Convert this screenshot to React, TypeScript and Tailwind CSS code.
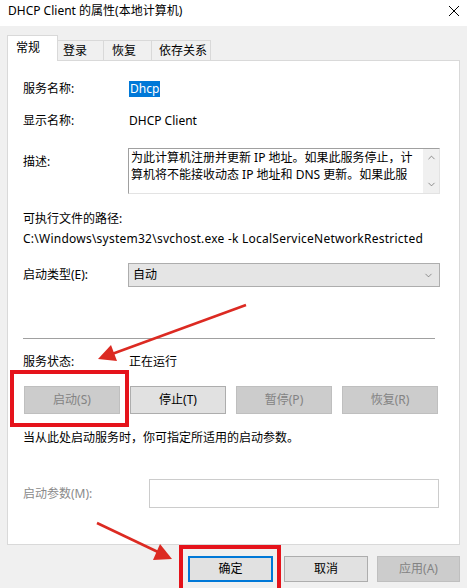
import { ChevronDown, ChevronUp } from "lucide-react";

const font = "font-['Noto_Sans','Noto_Sans_CJK_SC',sans-serif]";

function Tab({ label, w, pl, active }: { label: string; w: string; pl: string; active?: boolean }) {
  if (active) {
    return (
      <div className={`${w} ${pl} h-[26px] -mb-px bg-white border border-b-0 border-[#d9d9d9] pt-[3px] leading-[18px] relative z-10`}>
        {label}
      </div>
    );
  }
  return (
    <div className={`${w} ${pl} h-[20px] bg-[#f0f0f0] border-t border-r border-[#d9d9d9] leading-[20px]`}>
      {label}
    </div>
  );
}

function Btn({ label, w, disabled, primary }: { label: string; w: string; disabled?: boolean; primary?: boolean }) {
  const base = "flex items-center justify-center h-full";
  if (disabled) {
    return <div className={`${base} ${w} bg-[#cccccc] border border-[#bfbfbf] text-[#838383]`}>{label}</div>;
  }
  if (primary) {
    return <div className={`${base} ${w} bg-[#e1e1e1] border-2 border-[#0078d7]`}>{label}</div>;
  }
  return <div className={`${base} ${w} bg-[#e1e1e1] border border-[#adadad]`}>{label}</div>;
}

export default function App() {
  return (
    <div className={`relative w-[467px] h-[588px] overflow-hidden bg-[#f0f0f0] text-[12px] text-black ${font}`}>
      {/* Title bar */}
      <div className="h-[26px] bg-white flex items-center justify-between pl-2 pr-[7px]">
        <span className="leading-[20px] -mt-[4px]">DHCP Client 的属性(本地计算机)</span>
        <svg width="12" height="12" viewBox="0 0 12 12" className="-mt-[4px]">
          <path d="M1 1 L11 11 M11 1 L1 11" stroke="#000" strokeWidth="1" />
        </svg>
      </div>

      {/* Tabs */}
      <div className="pt-[9px] px-[7px]">
        <div className="flex items-end h-[25px]">
          <Tab label="常规" w="w-[51px]" pl="pl-[8px]" active />
          <Tab label="登录" w="w-[46px]" pl="pl-[5px]" />
          <Tab label="恢复" w="w-[48px]" pl="pl-[8px]" />
          <Tab label="依存关系" w="w-[59px]" pl="pl-[7px]" />
        </div>

        {/* Panel */}
        <div className="h-[485px] bg-white border border-[#d9d9d9] pl-[15px]">
          <div className="flex items-center h-[20px] mt-[18px]">
            <span className="w-[106px]">服务名称:</span>
            <span className="bg-[#0078d7] text-white leading-[16px] px-px">Dhcp</span>
          </div>
          <div className="flex items-center h-[20px] mt-[12px]">
            <span className="w-[106px]">显示名称:</span>
            <span>DHCP Client</span>
          </div>
          <div className="flex h-[46px] mt-[17px]">
            <span className="w-[105px] pt-[4px] leading-[20px]">描述:</span>
            <div className="flex w-[312px] h-[46px] border-t border-l border-[#a0a0a0] border-b border-r border-b-[#e3e3e3] border-r-[#e3e3e3]">
              <div className="flex-1 pl-[2px] leading-[17px] overflow-hidden">
                为此计算机注册并更新 IP 地址。如果此服务停止，计算机将不能接收动态 IP 地址和 DNS 更新。如果此服
              </div>
              <div className="w-[16px] bg-[#f0f0f0] flex flex-col items-center justify-between py-[3px] text-[#606060]">
                <ChevronUp size={11} strokeWidth={1.5} />
                <ChevronDown size={11} strokeWidth={1.5} />
              </div>
            </div>
          </div>
          <div className="flex items-center h-[20px] mt-[15px]">可执行文件的路径:</div>
          <div className="flex items-center h-[20px] tracking-[0.24px]">C:\Windows\system32\svchost.exe -k LocalServiceNetworkRestricted</div>
          <div className="flex items-center h-[24px] mt-[14px]">
            <span className="w-[105px]">启动类型(E):</span>
            <div className="flex items-center justify-between w-[312px] h-full bg-[#e5e5e5] border border-[#adadad] pl-[4px] pr-[5px]">
              <span>自动</span>
              <ChevronDown size={11} strokeWidth={1.25} className="text-[#505050]" />
            </div>
          </div>
          <div className="w-[412px] h-px bg-[#a0a0a0] mt-[51px]" />
          <div className="flex items-center h-[20px] mt-[13px]">
            <span className="w-[106px]">服务状态:</span>
            <span>正在运行</span>
          </div>
          <div className="flex h-[28px] mt-[14px] pl-px gap-[10px]">
            <Btn label="启动(S)" w="w-[96px]" disabled />
            <Btn label="停止(T)" w="w-[96px]" />
            <Btn label="暂停(P)" w="w-[96px]" disabled />
            <Btn label="恢复(R)" w="w-[96px]" disabled />
          </div>
          <div className="flex items-center h-[20px] mt-[14px]">当从此处启动服务时，你可指定所适用的启动参数。</div>
          <div className="flex items-center h-[29px] mt-[31px]">
            <span className="w-[126px] text-[#8a8a8a]">启动参数(M):</span>
            <div className="w-[290px] h-full bg-white border border-[#cccccc]" />
          </div>
        </div>

        {/* Dialog buttons */}
        <div className="flex justify-end h-[26px] mt-[11px]">
          <Btn label="确定" w="w-[85px]" primary />
          <div className="w-[11px]" />
          <Btn label="取消" w="w-[84px]" />
          <div className="w-[9px]" />
          <Btn label="应用(A)" w="w-[83px]" disabled />
        </div>
      </div>

      {/* Annotation overlays */}
      <div className="absolute left-[10px] top-[370px] w-[119px] h-[57px] border-4 border-[#e5131b] pointer-events-none" />
      <div className="absolute left-[179px] top-[545px] w-[102px] h-[48px] border-4 border-[#e5131b] pointer-events-none" />
      <svg className="absolute inset-0 pointer-events-none" width="467" height="588" viewBox="0 0 467 588">
        <line x1="246" y1="305" x2="112" y2="354" stroke="#dc2a22" strokeWidth="2.5" />
        <polygon points="98,359 111,345 117,361" fill="#dc2a22" />
        <line x1="97" y1="523" x2="158" y2="552" stroke="#dc2a22" strokeWidth="2.5" />
        <polygon points="172,559 160,544 153,560" fill="#dc2a22" />
      </svg>
    </div>
  );
}
